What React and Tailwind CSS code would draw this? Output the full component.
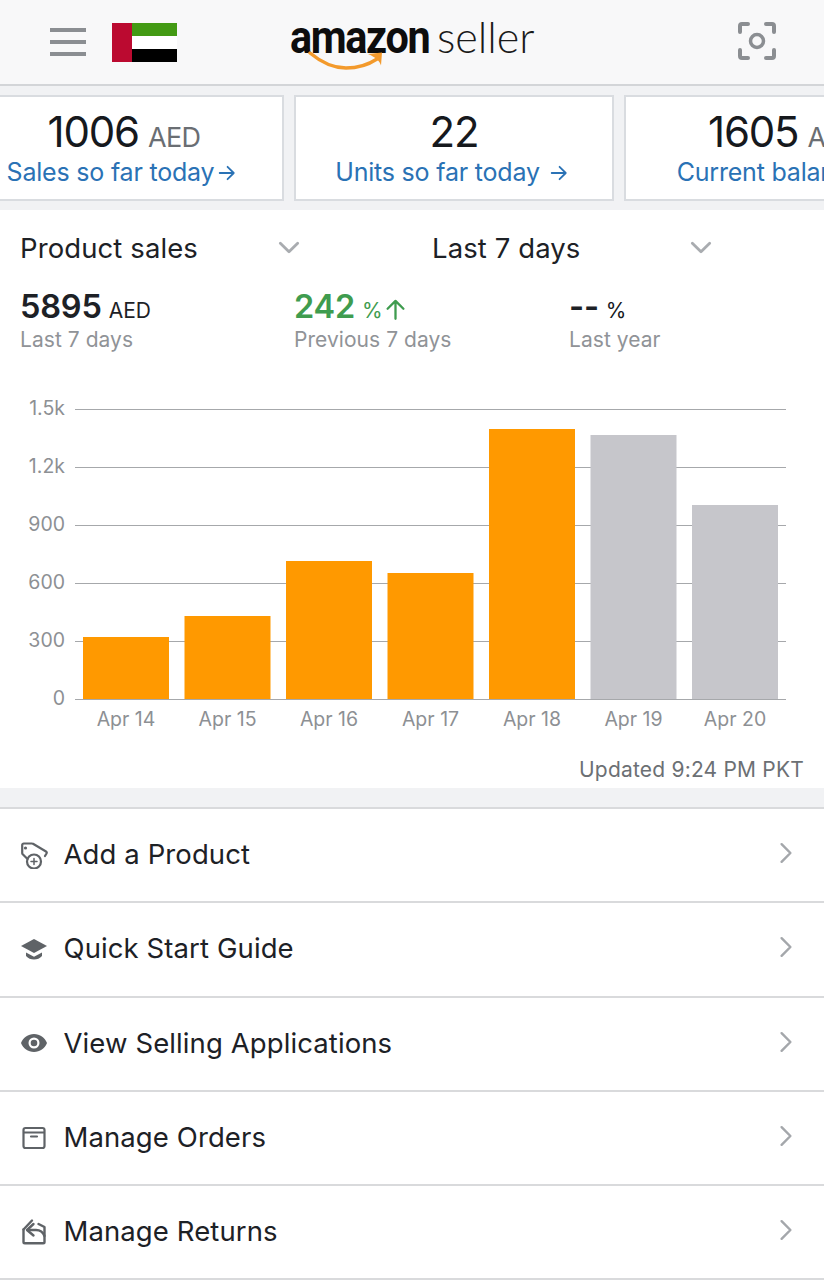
import React from "react";

const F = { fontFamily: "Inter, 'Liberation Sans', sans-serif" };

function Arrow({ className = "" }) {
  return (
    <svg viewBox="0 0 16 16" className={className} fill="none" stroke="currentColor" strokeWidth="1.6" strokeLinecap="round" strokeLinejoin="round">
      <path d="M1.5 8H14M8.5 2.5 14 8l-5.500 5.500" />
    </svg>
  );
}

function Card({ value, unit, label, gap, shift }) {
  return (
    <div className="w-[320px] h-[106px] shrink-0 bg-white border-2 border-[#d9dce0] flex flex-col items-center pt-[13px]">
      <div className="flex items-baseline gap-[9px] h-[44px] leading-[44px] whitespace-nowrap">
        <span className="text-[42px] tracking-[-1.2px] text-[#16191d]">{value}</span>
        {unit && <span className="text-[27px] tracking-[-0.6px] text-[#6a6e73]">{unit}</span>}
      </div>
      <div className={`flex items-center text-[25px] leading-[34px] mt-[1px] text-[#2a72b5] whitespace-nowrap tracking-[-0.2px] ${shift ? "mr-[5px]" : ""}`} style={{ gap }}>
        <span>{label}</span>
        <Arrow className="w-[18px] h-[18px] mt-[1px]" />
      </div>
    </div>
  );
}

function Stat({ w, value, unit, label, color, arrow, dash }) {
  return (
    <div className={w}>
      <div className="flex items-baseline h-[36px] leading-[34px] whitespace-nowrap">
        <span className={`text-[32.5px] font-semibold tracking-[-0.2px] ${color}`}>{value}</span>
        <span className={`text-[21px] ml-[7px] ${dash ? "text-[#16191d]" : color}`}>{unit}</span>
        {arrow && <Arrow className="w-[23px] h-[23px] ml-[1px] -rotate-90 self-center mt-[2px] text-[#3f9c4f]" />}
      </div>
      <div className="text-[21px] leading-[28px] text-[#909397] whitespace-nowrap tracking-[0.05px]">{label}</div>
    </div>
  );
}

function Chevron({ className = "" }) {
  return (
    <svg viewBox="0 0 20 12" className={className} fill="none" stroke="#a9acb0" strokeWidth="2.6" strokeLinecap="round" strokeLinejoin="round">
      <path d="M2 2l8 8 8-8" />
    </svg>
  );
}

function Chart() {
  const ticks = [["1.5k", 409], ["1.2k", 467], ["900", 525], ["600", 583], ["300", 641], ["0", 699]];
  const bars = [
    ["Apr 14", 83, 637, "#ff9900"],
    ["Apr 15", 184.500, 616, "#ff9900"],
    ["Apr 16", 286, 561, "#ff9900"],
    ["Apr 17", 387.500, 573, "#ff9900"],
    ["Apr 18", 489, 429, "#ff9900"],
    ["Apr 19", 590.500, 435, "#c6c6cb"],
    ["Apr 20", 692, 505, "#c6c6cb"],
  ];
  return (
    <svg viewBox="0 390 824 345" className="block w-[824px] h-[345px]" style={F}>
      {ticks.map(([t, y]) => (
        <g key={t}>
          <line x1="75" x2="786" y1={y + 0.5} y2={y + 0.5} stroke="#a6a8ab" strokeWidth="1" />
          <text x="65" y={y + 5.5} textAnchor="end" fontSize="19.500" fill="#8d9094">{t}</text>
        </g>
      ))}
      {bars.map(([l, x, y, c]) => (
        <g key={l}>
          <rect x={x} y={y} width="86" height={699 - y} fill={c} />
          <text x={x + 43} y="726" textAnchor="middle" fontSize="19.500" fill="#8d9094">{l}</text>
        </g>
      ))}
    </svg>
  );
}

const icons = {
  tag: (
    <g fill="none" stroke="#5f6367" strokeWidth="2.200" strokeLinejoin="round" strokeLinecap="round">
      <path d="M7.500 18 3 13.500a1.500 1.500 0 0 1-.8-1.300V4A1.500 1.500 0 0 1 3.700 2.500H12a2 2 0 0 1 1 .3L26 10.500a1.500 1.500 0 0 1 .5 2L25 15" />
      <circle cx="5.500" cy="7" r="1.600" fill="#5f6367" stroke="none" />
      <circle cx="14" cy="20.500" r="7" />
      <path d="M14 17.500v6M11 20.500h6" strokeWidth="1.500" />
    </g>
  ),
  grad: (
    <g fill="#5f6367">
      <path d="M14 4 1 11l13 7 13-7z" />
      <path d="M6 17.500v3.500c2 2.500 5 3.500 8 3.500s6-1 8-3.500v-3.500l-8 4.300z" />
    </g>
  ),
  eye: (
    <path fillRule="evenodd" fill="#5f6367" d="M14 5C8 5 3.200 8.600 1 14c2.200 5.400 7 9 13 9s10.800-3.600 13-9c-2.200-5.400-7-9-13-9zm0 14.500a5.500 5.500 0 1 1 0-11 5.500 5.500 0 0 1 0 11zm0-8.800a3.300 3.300 0 1 0 0 6.600 3.300 3.300 0 0 0 0-6.600z" />
  ),
  box: (
    <g fill="none" stroke="#5f6367" strokeWidth="2.200" strokeLinecap="round" strokeLinejoin="round">
      <rect x="3.500" y="4" width="21" height="20" rx="2" />
      <path d="M4 8.500h20M11 12.500h6" />
    </g>
  ),
  ret: (
    <g fill="none" stroke="#5f6367" strokeWidth="2.400" strokeLinecap="round" strokeLinejoin="round">
      <path d="M3.500 11.500v12.500a1.300 1.300 0 0 0 1.300 1.300h18.400a1.300 1.300 0 0 0 1.300-1.300V9l-6-3" />
      <path d="M3.500 11.500 12 2.500" />
      <path d="M13.500 6 7 12l6.500 5.500" />
      <path d="M7.500 12H16c4 0 7 2 8.500 6" />
    </g>
  ),
};

function Row({ icon, label }) {
  return (
    <div className="h-[94.300px] border-b-2 border-[#d9dadc] flex items-center pl-[20px] pr-[31px] pb-[1px]">
      <svg viewBox="0 0 28 28" className="w-[28px] h-[28px] shrink-0">{icons[icon]}</svg>
      <span className="ml-[15.5px] text-[27.5px] tracking-[0.1px] text-[#1d2126] flex-1 whitespace-nowrap">{label}</span>
      <svg viewBox="0 0 12 20" className="w-[14px] h-[22px] mb-[3px]" fill="none" stroke="#a4a7ab" strokeWidth="2.2" strokeLinecap="round" strokeLinejoin="round">
        <path d="M2 2l8 8-8 8" />
      </svg>
    </div>
  );
}

export default function App() {
  return (
    <div className="w-[824px] h-[1280px] overflow-hidden bg-white" style={F}>
      <header className="h-[86px] bg-[#f8f8f9] border-b-2 border-[#d3d5d8] flex items-center relative">
        <div className="ml-[50px] w-[36px] flex flex-col gap-[8px]">
          <div className="h-[4px] bg-[#8b8e92]" />
          <div className="h-[4px] bg-[#8b8e92]" />
          <div className="h-[4px] bg-[#8b8e92]" />
        </div>
        <div className="ml-[26px] w-[65px] h-[39px] flex">
          <div className="w-[20px] bg-[#bb0a30]" />
          <div className="flex-1 flex flex-col">
            <div className="flex-1 bg-[#439a14]" />
            <div className="flex-1 bg-white" />
            <div className="flex-1 bg-black" />
          </div>
        </div>
        <div className="relative ml-[113px] w-[246px] h-[70px]">
          <span className="absolute left-0 top-[-2px] text-[46px] leading-[64px] font-bold text-[#0d0d0d] origin-left scale-x-[0.9] tracking-[-1.5px]" style={{ fontFamily: "Roboto, sans-serif" }}>amazon</span>
          <span className="absolute left-[147px] top-[-3px] text-[44px] leading-[64px] font-light text-[#1a1a1a] origin-left scale-x-[0.98] tracking-[0px]" style={{ fontFamily: "Lato, sans-serif" }}>seller</span>
          <svg viewBox="0 0 76 20" className="absolute left-[18px] top-[44px] w-[76px] h-[20px]" fill="none">
            <path d="M2 2C14 12 26 17 38 17c12 0 22-3 31-9" stroke="#f39a2c" strokeWidth="3.400" strokeLinecap="round" />
            <path d="M60 3l14-1.500-1 13c-1-4-5-8-13-11.500z" fill="#f39a2c" />
          </svg>
        </div>
        <svg viewBox="0 0 40 40" className="absolute left-[737px] top-[21px] w-[40px] h-[40px]" fill="none" stroke="#8b8e92" strokeWidth="4" strokeLinecap="round" strokeLinejoin="round">
          <path d="M3 11V5a2 2 0 0 1 2-2h6M29 3h6a2 2 0 0 1 2 2v6M37 29v6a2 2 0 0 1-2 2h-6M11 37H5a2 2 0 0 1-2-2v-6" />
          <circle cx="20" cy="20" r="6.500" strokeWidth="3.500" />
        </svg>
      </header>

      <section className="h-[124px] bg-[#f1f2f4] pt-[9px] overflow-hidden">
        <div className="flex gap-[10px] ml-[-36px]">
          <Card value="1006" unit="AED" label="Sales so far today" gap="4px" shift />
          <Card value="22" label="Units so far today" gap="10px" shift />
          <Card value="1605" unit="AED" label="Current balance" gap="10px" />
        </div>
      </section>

      <section className="h-[578px] bg-white">
        <div className="h-[80px] flex items-center text-[27.5px] text-[#1d2126] pl-[20px] pb-[2px]">
          <div className="w-[412px] flex items-center">
            <span className="w-[258px] tracking-[0.1px]">Product sales</span>
            <Chevron className="w-[22px] h-[13px] mb-[4px]" />
          </div>
          <div className="flex items-center">
            <span className="w-[258px] tracking-[0.1px]">Last 7 days</span>
            <Chevron className="w-[22px] h-[13px] mb-[4px]" />
          </div>
        </div>
        <div className="flex pl-[20px]">
          <Stat w="w-[274px]" value="5895" unit="AED" label="Last 7 days" color="text-[#1d2126]" />
          <Stat w="w-[275px]" value="242" unit="%" label="Previous 7 days" color="text-[#3f9c4f]" arrow />
          <Stat w="w-[200px]" value="--" unit="%" label="Last year" color="text-[#1d2126]" dash />
        </div>
        <div className="mt-[36px]">
          <Chart />
        </div>
        <div className="text-right pr-[20px] mt-[20px] text-[21px] leading-[30px] text-[#6c7074] tracking-[0.2px]">Updated 9:24 PM PKT</div>
      </section>

      <section className="h-[19px] bg-[#f1f2f4]" />

      <section className="border-t-2 border-[#d9dadc] bg-white">
        <Row icon="tag" label="Add a Product" />
        <Row icon="grad" label="Quick Start Guide" />
        <Row icon="eye" label="View Selling Applications" />
        <Row icon="box" label="Manage Orders" />
        <Row icon="ret" label="Manage Returns" />
      </section>
    </div>
  );
}
